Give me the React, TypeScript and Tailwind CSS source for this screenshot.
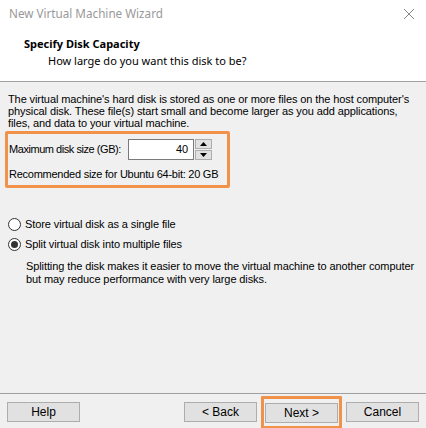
import React from "react";

const body = { fontFamily: '"Liberation Sans", Arial, sans-serif', letterSpacing: "-0.1px" };
const head = { fontFamily: '"Noto Sans", "Open Sans", sans-serif' };

function Radio({ checked, label }: { checked?: boolean; label: string }) {
  return (
    <div className="flex items-center h-[20px]">
      <div className="w-[13px] h-[13px] rounded-full border border-[#333] bg-white flex items-center justify-center">
        {checked && <div className="w-[7px] h-[7px] rounded-full bg-[#333]" />}
      </div>
      <span className="ml-[4px]">{label}</span>
    </div>
  );
}

function Btn({ label }: { label: string }) {
  return (
    <div className="w-[73px] h-[20px] bg-[#e1e1e1] border border-[#adadad] flex items-center justify-center text-[12px] text-black">
      {label}
    </div>
  );
}

export default function App() {
  return (
    <div className="w-[426px] h-[428px] bg-[#f0f0f0] flex flex-col overflow-hidden text-[11px] text-black" style={body}>
      <div className="h-[82px] bg-white border-b border-[#a0a0a0] flex flex-col" style={{ letterSpacing: 0 }}>
        <div className="h-[28px] flex items-center justify-between pl-[9px] pr-[11px]">
          <span className="text-[11.7px] text-[#999]" style={head}>New Virtual Machine Wizard</span>
          <svg width="12" height="12" viewBox="0 0 12 12">
            <path d="M1 1L11 11M11 1L1 11" stroke="#888" strokeWidth="1" />
          </svg>
        </div>
        <div className="pl-[24px] pt-[8px] text-[11px] font-bold leading-[16px]" style={head}>Specify Disk Capacity</div>
        <div className="pl-[48px] pt-[1px] text-[11px] leading-[16px]" style={head}>How large do you want this disk to be?</div>
      </div>
      <div className="px-[8px] pt-[11px] leading-[12px] flex flex-col">
        <p>The virtual machine's hard disk is stored as one or more files on the host computer's physical disk. These file(s) start small and become larger as you add applications, files, and data to your virtual machine.</p>
      </div>
      <div className="mt-[2px] ml-[5px] w-[225px] h-[57px] border-[3px] border-[#f0924a] rounded-[2px] flex flex-col pl-[1px]">
        <div className="flex items-center mt-[5px]">
          <span className="w-[119px] whitespace-nowrap" style={{ letterSpacing: "-0.45px" }}>Maximum disk size (GB):</span>
          <div className="w-[66px] h-[21px] bg-white border border-[#7a7a7a] flex items-center justify-end pr-[5px]">40</div>
          <div className="flex flex-col ml-[1px] gap-[1px]">
            <div className="w-[17px] h-[10px] bg-[#e1e1e1] border border-[#adadad] flex items-center justify-center">
              <svg width="7" height="4" viewBox="0 0 7 4"><path d="M0 4L3.5 0L7 4Z" fill="#000" /></svg>
            </div>
            <div className="w-[17px] h-[10px] bg-[#e1e1e1] border border-[#adadad] flex items-center justify-center">
              <svg width="7" height="4" viewBox="0 0 7 4"><path d="M0 0L3.5 4L7 0Z" fill="#000" /></svg>
            </div>
          </div>
        </div>
        <div className="mt-[6px] whitespace-nowrap" style={{ letterSpacing: "-0.25px" }}>Recommended size for Ubuntu 64-bit: 20 GB</div>
      </div>
      <div className="mt-[26px] pl-[8px] flex flex-col">
        <Radio label="Store virtual disk as a single file" />
        <Radio checked label="Split virtual disk into multiple files" />
        <p className="pl-[18px] mt-[6px] leading-[13px]">Splitting the disk makes it easier to move the virtual machine to another computer but may reduce performance with very large disks.</p>
      </div>
      <div className="flex-1" />
      <div className="border-t border-[#a0a0a0] h-[35px] flex items-start pt-[8px] px-[7px]" style={{ letterSpacing: 0 }}>
        <Btn label="Help" />
        <div className="flex-1" />
        <Btn label="< Back" />
        <div className="ml-[4px] border-[3px] border-[#f0924a] -mt-[6px] pt-[4px] pb-[3px] px-[1px] rounded-[1px]">
          <Btn label="Next >" />
        </div>
        <div className="ml-[4px]"><Btn label="Cancel" /></div>
      </div>
    </div>
  );
}
